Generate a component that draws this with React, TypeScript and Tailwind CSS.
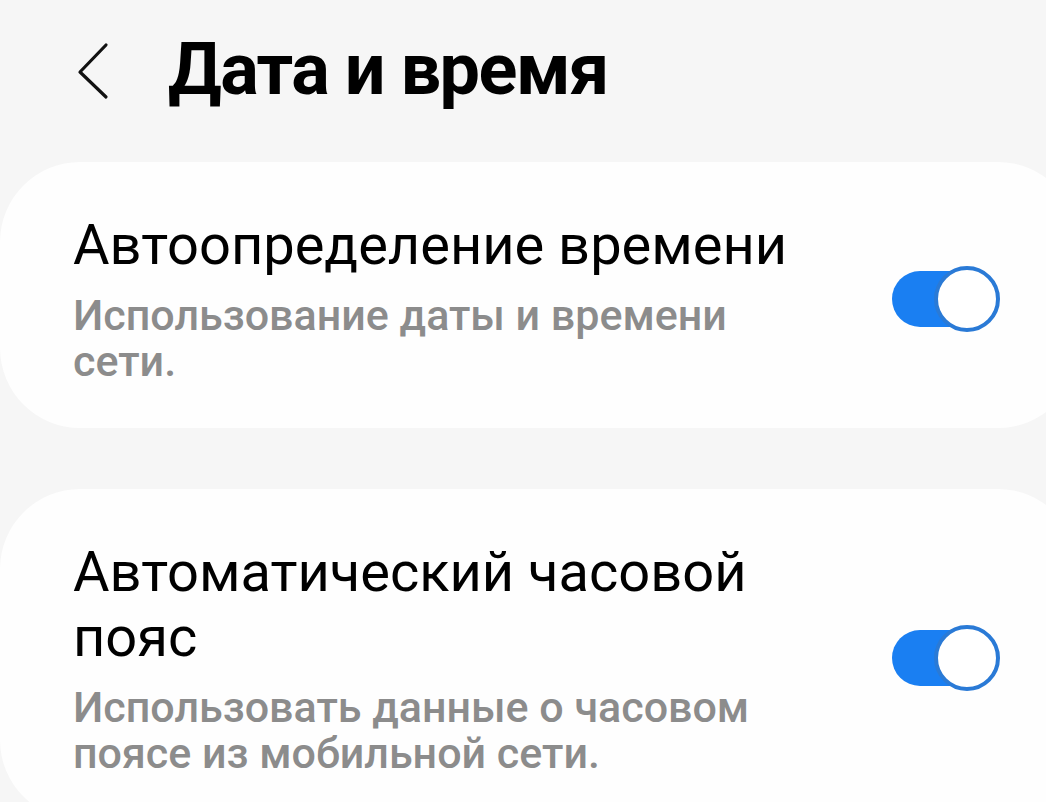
import React from 'react';

function Toggle() {
  return (
    <div className="relative h-[66px] w-[108px] shrink-0">
      <div className="absolute left-0 top-[5px] h-[56px] w-[92px] rounded-full bg-[#1a7ff2]" />
      <div className="absolute right-0 top-0 h-[66px] w-[66px] rounded-full border-[4px] border-[#2a7ad6] bg-white" />
    </div>
  );
}

function SettingCard({ title, subtitle }: { title: string[]; subtitle: string[] }) {
  return (
    <div className="mr-[-32px] flex items-center justify-between rounded-[80px] bg-[#fefefe] pb-[44px] pl-[73px] pr-[78px] pt-[51px]">
      <div className="flex flex-col">
        <div className="text-[56px] leading-[65px] text-black">
          {title.map((line) => (
            <div key={line}>{line}</div>
          ))}
        </div>
        <div className="mt-[14px] text-[43px] font-medium leading-[46px] text-[#8c8c8c]">
          {subtitle.map((line) => (
            <div key={line}>{line}</div>
          ))}
        </div>
      </div>
      <Toggle />
    </div>
  );
}

export default function App() {
  return (
    <div
      className="h-[802px] w-[1046px] overflow-hidden bg-[#f6f6f6]"
      style={{ fontFamily: 'Roboto, "Noto Sans", sans-serif' }}
    >
      <div className="flex items-center pl-[76px] pt-[34px]">
        <svg width="36" height="58" viewBox="0 0 36 58" fill="none" className="mt-[2px]">
          <polyline
            points="30,5 4,32 30,57"
            stroke="#111"
            strokeWidth="3.2"
            strokeLinecap="round"
            strokeLinejoin="round"
            transform="translate(0,-2)"
          />
        </svg>
        <h1 className="ml-[56px] text-[72px] font-bold leading-[72px] tracking-[-1.5px] text-black">
          Дата и время
        </h1>
      </div>

      <div className="mt-[56px] flex flex-col gap-[61px]">
        <SettingCard
          title={['Автоопределение времени']}
          subtitle={['Использование даты и времени', 'сети.']}
        />
        <SettingCard
          title={['Автоматический часовой', 'пояс']}
          subtitle={['Использовать данные о часовом', 'поясе из мобильной сети.']}
        />
      </div>
    </div>
  );
}
